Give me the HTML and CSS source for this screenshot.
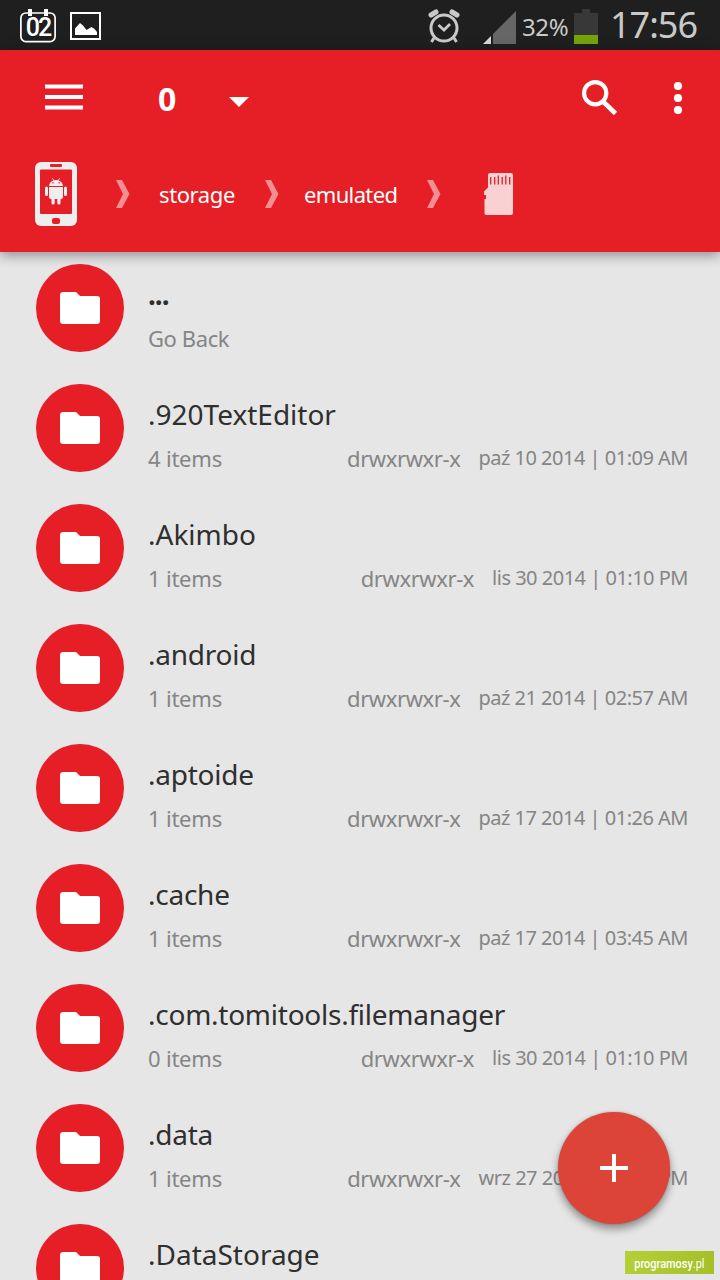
FILE: index.html
```
<!DOCTYPE html>
<html lang="pl">
<head>
<meta charset="utf-8">
<title>File manager</title>
<link rel="stylesheet" href="styles.css">
</head>
<body>
<svg class="defs" width="0" height="0">
  <symbol id="folder" viewBox="0 0 40 32"><path fill="#fff" d="M3 0H16L20 4H37Q40 4 40 7V29Q40 32 37 32H3Q0 32 0 29V3Q0 0 3 0Z"/></symbol>
  <symbol id="chevron" viewBox="0 0 14 28"><path fill="#f38e92" d="M0 0H6L13.500 14L6 28H0L7 14Z"/></symbol>
</svg>
<div class="screen">
  <header class="status">
    <div class="status-left">
      <div class="calendar">
        <svg width="36" height="34" viewBox="0 0 36 34"><rect x=".9" y="4" width="34.2" height="28.6" rx="5" fill="none" stroke="#fff" stroke-width="1.7"/><path d="M8 0h4v7H8zM24 0h4v7h-4z" fill="#fff"/></svg>
        <span class="calendar-day">02</span>
      </div>
      <svg width="31" height="28" viewBox="0 0 31 28"><rect x="1" y="1" width="29" height="26" fill="none" stroke="#fff" stroke-width="2"/><path fill="#fff" d="M5 23V16.500L10 11L13 13.500L16.500 18L21.500 15L24.500 17L27 20V23Z"/></svg>
    </div>
    <div class="status-right">
      <svg class="alarm" width="32" height="35" viewBox="0 0 32 35" fill="none" stroke="#c9c9c9"><circle cx="16" cy="19" r="13" stroke-width="3"/><path stroke-width="5" stroke-linecap="round" d="M3 6L8 3M29 6L24 3"/><path stroke-width="3" d="M6 29L3.500 33M26 29L28.500 33"/><path stroke-width="2.800" d="M10.500 16L16 21L22 15"/></svg>
      <svg class="signal" width="33" height="33" viewBox="0 0 33 33"><path fill="#666" d="M10 23L33 0V33H10Z"/><path fill="#d8d8d8" d="M0 33L8 25V33Z"/></svg>
      <span class="percent">32%</span>
      <svg class="battery" width="24" height="35" viewBox="0 0 24 35"><path fill="#383838" d="M8 0h8v4h8v22H0V4h8z"/><path fill="#74a20a" d="M0 26h24v9H0z"/></svg>
      <span class="clock">17:56</span>
    </div>
  </header>

  <div class="header">
    <div class="toolbar">
      <svg class="menu" width="38" height="26" viewBox="0 0 38 26"><path fill="#fff" d="M0 0.500h38v4H0zM0 11h38v4H0zM0 21.500h38v4H0z"/></svg>
      <span class="count">0</span>
      <svg class="caret" width="20" height="10" viewBox="0 0 20 10"><path fill="#fff" d="M0 0H20L10 10Z"/></svg>
      <svg class="search" width="36" height="36" viewBox="0 0 36 36" fill="none" stroke="#fff"><circle cx="13.200" cy="13.200" r="11.100" stroke-width="4.200"/><path stroke-width="4.600" d="M21.500 22L33.500 33.500"/></svg>
      <svg width="10" height="34" viewBox="0 0 10 34" fill="#fff"><circle cx="5" cy="5" r="4.100"/><circle cx="5" cy="17" r="4.100"/><circle cx="5" cy="29" r="4.100"/></svg>
    </div>
    <nav class="crumbs">
      <svg class="phone" width="42" height="64" viewBox="0 0 42 64"><rect width="42" height="64" rx="6" fill="#eee"/><g fill="#e61e25"><rect x="15" y="2" width="12" height="3" rx="1"/><rect x="5" y="7.500" width="32" height="44.500" rx="1"/><rect x="17" y="56" width="8" height="6" rx="2"/></g><g fill="#eee"><path d="M14 24Q14.500 19.500 18.500 18.500L16.800 16.300L17.300 16L19.200 18.200Q21 17.600 22.800 18.200L24.700 16L25.200 16.300L23.500 18.500Q27.500 19.500 28 24Z"/><path d="M14 25H28V35Q28 37 26 37H25.500V41Q25.500 42.500 24 42.500Q22.300 42.500 22.300 41V37H19.700V41Q19.700 42.500 18 42.500Q16.500 42.500 16.500 41V37H16Q14 37 14 35Z"/><rect x="10" y="24.500" width="3" height="9.500" rx="1.500"/><rect x="29" y="24.500" width="3" height="9.500" rx="1.500"/></g><path fill="#e61e25" d="M17.300 20.300h1.300v1.300h-1.300zM23.500 20.300h1.300v1.300h-1.300z"/></svg>
      <svg class="chev-first" width="14" height="28"><use href="#chevron"/></svg>
      <span class="crumb storage">storage</span>
      <svg width="14" height="28"><use href="#chevron"/></svg>
      <span class="crumb emulated">emulated</span>
      <svg width="14" height="28"><use href="#chevron"/></svg>
      <svg class="sdcard" width="30" height="42" viewBox="0 0 30 42"><path fill="#fad1d3" d="M6 0H27Q29 0 29 2V40Q29 42 27 42H2Q.5 42 .5 40V26H2V22H0V18.500L4 14.500V2Q4 0 6 0Z"/><path stroke="#e61e25" stroke-width="1.300" d="M6.700 4V11.500M10.700 4V11.500M14.300 2.500V11.500M18.200 4V11.500M21.800 2.500V11.500M25.700 4V11.500"/></svg>
    </nav>
  </div>

  <main class="list">
    <div class="row"><div class="disc"><svg width="40" height="32"><use href="#folder"/></svg></div><div class="info"><div class="name dots">...</div><div class="meta"><span class="back">Go Back</span></div></div></div>
    <div class="row"><div class="disc"><svg width="40" height="32"><use href="#folder"/></svg></div><div class="info"><div class="name">.920TextEditor</div><div class="meta"><span class="items">4 items</span><span class="perm">drwxrwxr-x</span><span class="date">paź 10 2014 | 01:09 AM</span></div></div></div>
    <div class="row"><div class="disc"><svg width="40" height="32"><use href="#folder"/></svg></div><div class="info"><div class="name">.Akimbo</div><div class="meta"><span class="items">1 items</span><span class="perm">drwxrwxr-x</span><span class="date">lis 30 2014 | 01:10 PM</span></div></div></div>
    <div class="row"><div class="disc"><svg width="40" height="32"><use href="#folder"/></svg></div><div class="info"><div class="name tight">.android</div><div class="meta"><span class="items">1 items</span><span class="perm">drwxrwxr-x</span><span class="date">paź 21 2014 | 02:57 AM</span></div></div></div>
    <div class="row"><div class="disc"><svg width="40" height="32"><use href="#folder"/></svg></div><div class="info"><div class="name tight">.aptoide</div><div class="meta"><span class="items">1 items</span><span class="perm">drwxrwxr-x</span><span class="date">paź 17 2014 | 01:26 AM</span></div></div></div>
    <div class="row"><div class="disc"><svg width="40" height="32"><use href="#folder"/></svg></div><div class="info"><div class="name tight">.cache</div><div class="meta"><span class="items">1 items</span><span class="perm">drwxrwxr-x</span><span class="date">paź 17 2014 | 03:45 AM</span></div></div></div>
    <div class="row"><div class="disc"><svg width="40" height="32"><use href="#folder"/></svg></div><div class="info"><div class="name tight">.com.tomitools.filemanager</div><div class="meta"><span class="items">0 items</span><span class="perm">drwxrwxr-x</span><span class="date">lis 30 2014 | 01:10 PM</span></div></div></div>
    <div class="row"><div class="disc"><svg width="40" height="32"><use href="#folder"/></svg></div><div class="info"><div class="name tight">.data</div><div class="meta"><span class="items">1 items</span><span class="perm">drwxrwxr-x</span><span class="date">wrz 27 2014 | 01:29 PM</span></div></div></div>
    <div class="row"><div class="disc"><svg width="40" height="32"><use href="#folder"/></svg></div><div class="info"><div class="name">.DataStorage</div></div></div>
  </main>

  <div class="fab"><svg width="28" height="28" viewBox="0 0 28 28"><path fill="#fff" d="M12 0h4v12h12v4H16v12h-4V16H0v-4h12z"/></svg></div>
  <div class="watermark"><span class="watermark-text"><b>programosy</b>.pl</span></div>
</div>
</body>
</html>
```
FILE: styles.css
```
* { box-sizing: border-box; }
body { margin: 0; font-family: "Noto Sans", sans-serif; }
svg { display: block; flex: none; }
.defs { position: absolute; }
.screen { position: relative; width: 720px; height: 1280px; overflow: hidden; background: #e6e6e6; }
span, .name { white-space: nowrap; }

.status { display: flex; justify-content: space-between; height: 50px; background: #1f1f1f; color: #c9c9c9; }
.status-left { display: flex; gap: 14px; padding: 9px 0 0 20px; }
.status-left > svg { margin-top: 3px; }
.calendar { position: relative; width: 36px; height: 34px; }
.calendar-day { position: absolute; inset: 7px 0 0; text-align: center; font: 500 25px/24px Roboto, sans-serif; letter-spacing: -2px; color: #fff; }
.status-right { display: flex; padding-right: 22px; }
.alarm { margin: 9px 23px 0 0; }
.signal { margin: 11px 6px 0 0; }
.percent { width: 46px; margin-right: 6px; font-size: 24px; line-height: 53px; letter-spacing: -0.4px; }
.battery { margin: 9px 12px 0 0; }
.clock { width: 88px; font-size: 36px; line-height: 50px; letter-spacing: -1px; }

.header { position: relative; height: 202px; background: #e61e25; color: #fff; box-shadow: 0 3px 12px rgba(0,0,0,.4); }
.toolbar { display: flex; align-items: center; height: 96px; padding: 0 37px 0 45px; }
.menu { margin-bottom: 2px; }
.count { width: 18px; margin: 1px 53px 0 75px; font-size: 32px; font-weight: 700; line-height: 40px; }
.caret { margin-top: 8px; }
.search { margin: 0 55px 0 auto; }
.crumbs { display: flex; align-items: center; height: 96px; padding-left: 35px; }
.crumb { font-size: 22px; line-height: 30px; }
.chev-first { margin-left: 39px; }
.storage { width: 76px; margin: 0 30px 0 29px; letter-spacing: -0.4px; }
.emulated { width: 94px; margin: 0 29px 0 25px; letter-spacing: -0.65px; }
.sdcard { margin-left: 43px; }

.list { display: flex; flex-direction: column; gap: 32px; padding: 12px 32px 0 36px; }
.row { display: flex; flex: none; height: 88px; gap: 24px; }
.disc { display: flex; align-items: center; justify-content: center; flex: none; width: 88px; height: 88px; border-radius: 50%; background: #e61e25; }
.info { flex: 1; padding-top: 10px; }
.name { height: 40px; font-size: 28px; line-height: 40px; color: #2f2f2f; }
.tight { letter-spacing: -0.25px; }
.dots { font-weight: 700; letter-spacing: -1px; }
.meta { display: flex; height: 30px; margin-top: 9px; font-size: 22px; line-height: 31px; color: #858585; }
.items { letter-spacing: -0.2px; }
.back { letter-spacing: -0.4px; }
.perm { margin: 0 18px 0 auto; letter-spacing: -0.4px; }
.date { margin-top: -1px; font-size: 20px; letter-spacing: -0.5px; }

.fab { position: absolute; left: 558px; top: 1112px; display: flex; align-items: center; justify-content: center; width: 112px; height: 112px; border-radius: 50%; background: #db4437; box-shadow: 0 5px 9px rgba(0,0,0,.4), 0 0 2px rgba(0,0,0,.25); }
.watermark { position: absolute; left: 625px; top: 1251px; display: flex; align-items: center; justify-content: center; width: 89px; height: 23px; background: linear-gradient(100deg, #b5cf37, #a5bf28); color: #fff; }
.watermark-text { font: 13.500px/20px Roboto, sans-serif; transform: scaleX(.81); }
.watermark-text b { font-weight: 500; }
```
